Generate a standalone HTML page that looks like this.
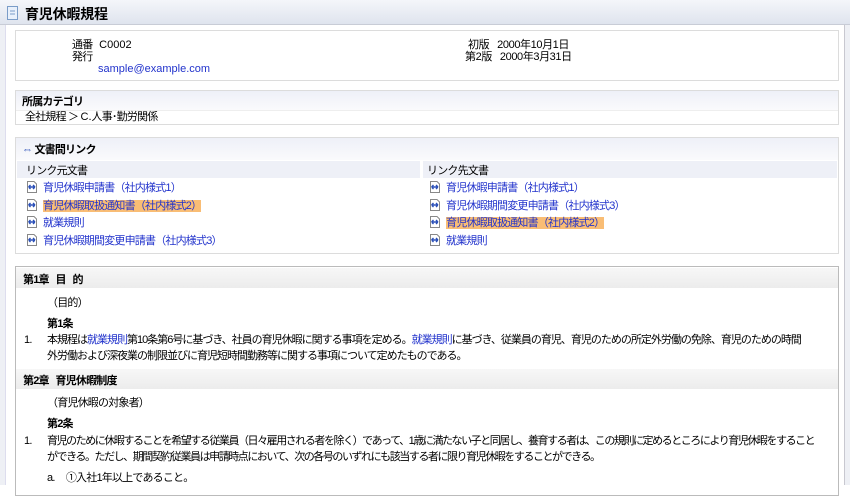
<!DOCTYPE html>
<html><head><meta charset="utf-8"><style>
*{margin:0;padding:0;box-sizing:border-box}
body{width:850px;height:485px;overflow:hidden;background:#fff;font-family:"Liberation Sans","Noto Sans CJK JP",sans-serif;font-size:11px;color:#000;position:relative;letter-spacing:-0.8px}
.abs{position:absolute;white-space:nowrap}
.hdr{position:absolute;left:0;top:0;width:850px;height:25px;background:linear-gradient(#f4f6fa,#dfe4ee);border-bottom:1px solid #c8ccd6}
.side{position:absolute;left:0;top:25px;width:6px;height:460px;background:#eef0f5;border-right:1px solid #dde}
.rside{position:absolute;right:0;top:25px;width:6px;height:460px;background:#eef0f5;border-left:1px solid #c8c8d0}
.box{position:absolute;left:15px;width:824px;border:1px solid #dcdcdc;background:#fff}
a{color:#2233cc;text-decoration:none}
.hl{background:#f9bd75;color:#2233cc}
.ico{display:inline-block;width:11px;height:12px;vertical-align:-2px;margin-right:6px}
.ch{position:absolute;left:1px;width:822px;height:20px;background:linear-gradient(#f7f7f7,#ececec);font-weight:bold;padding:3px 7px}
.l{letter-spacing:0}
</style></head><body>
<svg width="0" height="0" style="position:absolute"><defs><symbol id="ic" viewBox="0 0 11 12"><path d="M1.5 0.5H8L10.5 3V11.5H1.5Z" fill="#fff" stroke="#888"/><path d="M2.5 6H9M2.5 6L4.5 4M2.5 6L4.5 8M9 6L7 4M9 6L7 8" stroke="#2a4fb8" stroke-width="1.4" fill="none"/></symbol></defs></svg>
<div class="hdr"></div>
<div class="side"></div><div class="rside"></div>
<svg class="abs" style="left:7px;top:6px" width="11" height="14"><rect x="0.5" y="0.5" width="10" height="13" fill="#e8f0fb" stroke="#7a9cc8"/><line x1="3" y1="5" x2="8" y2="5" stroke="#7a9cc8"/><line x1="3" y1="8" x2="8" y2="8" stroke="#7a9cc8"/></svg>
<div class="abs" style="left:25px;top:4px;font-size:14px;font-weight:bold;letter-spacing:-0.2px">育児休暇規程</div>

<div class="box" style="top:30px;height:51px"></div>
<div class="abs" style="left:72px;top:36px">通番&nbsp;&nbsp; <span class="l">C0002</span></div>
<div class="abs" style="left:72px;top:48px">発行</div>
<div class="abs" style="left:98px;top:63px;letter-spacing:0"><a>sample@example.com</a></div>
<div class="abs" style="left:468px;top:36px;letter-spacing:-0.4px">初版&nbsp;&nbsp; 2000年10月1日</div>
<div class="abs" style="left:465px;top:48px;letter-spacing:-0.4px">第2版&nbsp;&nbsp; 2000年3月31日</div>

<div class="box" style="top:90px;height:35px">
<div style="height:19px;background:linear-gradient(#eef0f8,#fafafc);font-weight:bold;padding:2px 6px">所属カテゴリ</div>
<div style="padding:0 9px;line-height:13px;border-top:1px solid #eee">全社規程 ＞ <span class="l">C.</span>人事･勤労関係</div>
</div>

<div class="box" style="top:137px;height:117px">
<div style="height:22px;background:linear-gradient(#eef0f8,#fafafc);font-weight:bold;padding:3px 6px"><span style="color:#2a4fb8">⇔</span> 文書間リンク</div>
</div>
<div class="abs" style="left:17px;top:161px;width:403px;height:17px;background:#eef0f7;padding:1px 9px">リンク元文書</div>
<div class="abs" style="left:423px;top:161px;width:414px;height:17px;background:#eef0f7;padding:1px 4px">リンク先文書</div>
<div class="abs" style="left:26px;top:180px;line-height:17.5px">
<div><svg class="ico"><use href="#ic"/></svg><a>育児休暇申請書（社内様式1）</a></div>
<div><svg class="ico"><use href="#ic"/></svg><a class="hl">育児休暇取扱通知書（社内様式2）</a></div>
<div><svg class="ico"><use href="#ic"/></svg><a>就業規則</a></div>
<div><svg class="ico"><use href="#ic"/></svg><a>育児休暇期間変更申請書（社内様式3）</a></div>
</div>
<div class="abs" style="left:429px;top:180px;line-height:17.5px">
<div><svg class="ico"><use href="#ic"/></svg><a>育児休暇申請書（社内様式1）</a></div>
<div><svg class="ico"><use href="#ic"/></svg><a>育児休暇期間変更申請書（社内様式3）</a></div>
<div><svg class="ico"><use href="#ic"/></svg><a class="hl">育児休暇取扱通知書（社内様式2）</a></div>
<div><svg class="ico"><use href="#ic"/></svg><a>就業規則</a></div>
</div>

<div class="box" style="top:266px;height:230px;border-color:#bbb"></div>
<div class="ch" style="left:16px;top:268px">第1章&nbsp;&nbsp; 目&nbsp;&nbsp; 的</div>
<div class="abs" style="left:47px;top:294px">（目的）</div>
<div class="abs" style="left:47px;top:315px;font-weight:bold">第1条</div>
<div class="abs" style="left:24px;top:333px;line-height:15.5px">1.</div>
<div class="abs" style="left:47px;top:333px;line-height:15.5px;letter-spacing:-1px">本規程は<a>就業規則</a>第10条第6号に基づき、社員の育児休暇に関する事項を定める。<a>就業規則</a>に基づき、従業員の育児、育児のための所定外労働の免除、育児のための時間<br>外労働および深夜業の制限並びに育児短時間勤務等に関する事項について定めたものである。</div>
<div class="ch" style="left:16px;top:369px">第2章&nbsp;&nbsp; 育児休暇制度</div>
<div class="abs" style="left:47px;top:394px">（育児休暇の対象者）</div>
<div class="abs" style="left:47px;top:415px;font-weight:bold">第2条</div>
<div class="abs" style="left:24px;top:433px;line-height:16px">1.</div>
<div class="abs" style="left:47px;top:433px;line-height:16px;letter-spacing:-1.45px">育児のために休暇することを希望する従業員（日々雇用される者を除く）であって、1歳に満たない子と同居し、養育する者は、この規則に定めるところにより育児休暇をすること<br>ができる。ただし、期間契約従業員は申請時点において、次の各号のいずれにも該当する者に限り育児休暇をすることができる。</div>
<div class="abs" style="left:47px;top:469px">a.&nbsp;&nbsp;&nbsp;&nbsp; ①入社1年以上であること。</div>
</body></html>
